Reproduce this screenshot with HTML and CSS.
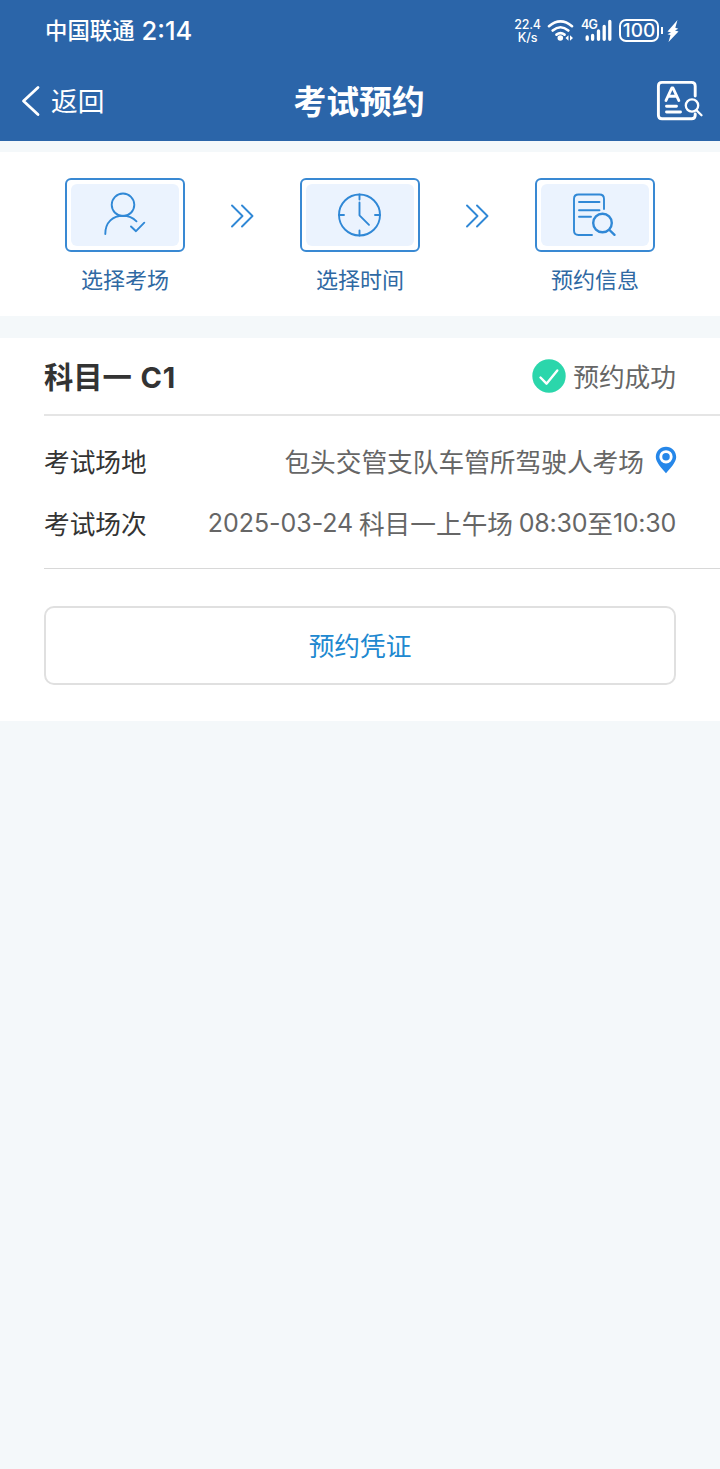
FILE: index.html
```
<!DOCTYPE html>
<html lang="zh-CN">
<head>
  <meta charset="UTF-8" />
  <meta name="viewport" content="width=device-width, initial-scale=1.0" />
  <title>考试预约</title>
  <link rel="stylesheet" href="styles.css">
</head>
<body>
  <!-- Header -->
  <header>
    <div class="status-bar">
      <div class="carrier"><span class="operator">中国联通</span><span class="clock">2:14</span></div>
      <div class="status-icons">
        <div class="speed"><span>22.4</span><span>K/s</span></div>
        <svg class="wifi" width="28" height="24" viewBox="0 0 28 24" fill="none" stroke="#fff" stroke-width="2.6" stroke-linecap="round">
          <path d="M2 7.2Q13.500 -2.500 25 7.200M5.700 11.500Q13.500 5 21.300 11.500M9.500 15.600Q13.500 12.500 17.500 15.600" />
          <circle cx="13.300" cy="19" r="2.800" fill="#fff" stroke="none" />
          <path d="M18.500 19l3-2.800v5.600zM26 19l-3-2.800v5.600z" fill="#fff" stroke="none" />
        </svg>
        <div class="signal">
          <span class="net">4G</span>
          <svg width="32" height="24" viewBox="0 0 32 24" stroke="#fff" stroke-width="3.300" stroke-linecap="round">
            <path d="M6.200 18v2.300M11.600 16.500v3.800M17.500 12v8.300M23.200 7.500v12.800M28.800 2.500v17.800" />
          </svg>
        </div>
        <div class="battery">100</div>
        <svg class="bolt" width="14" height="24" viewBox="0 0 14 24" fill="#fff">
          <path d="M11.500 1L1.500 12.500l3.500 1-3.500 1.800 3 .7L2.500 23 12.500 12.500l-3.500-1 3.300-1.800-3-.9z" />
        </svg>
      </div>
    </div>
    <nav>
      <a class="back" href="#">
        <svg width="20" height="32" viewBox="0 0 20 32" fill="none" stroke="#fff" stroke-width="2.800" stroke-linecap="round" stroke-linejoin="round">
          <path d="M17 2.500L2.500 16 17 29.500" />
        </svg>
        <span>返回</span>
      </a>
      <h1>考试预约</h1>
      <a class="records" href="#">
        <svg width="48" height="42" viewBox="0 0 48 42" fill="none" stroke="#fff" stroke-width="2.900" stroke-linecap="round" stroke-linejoin="round">
          <path d="M39.200 16V6q0-3.600-3.600-3.600H6Q2.400 2.400 2.400 6v29.200q0 3.600 3.600 3.600h29.600q3.600 0 3.600-3.600V34" />
          <path d="M10 20.500l5.800-12.500h1.200l5.800 12.500M12 16.300h8.700M10.500 26.200h10M10.500 32h14" />
          <circle cx="36" cy="25.500" r="6.200" stroke-width="2.300" />
          <path d="M40.500 30.200l5 5" stroke-width="2.300" />
        </svg>
      </a>
    </nav>
  </header>

  <!-- Steps -->
  <section class="steps">
    <div class="step">
      <div class="step-box">
        <svg viewBox="0 0 108 62">
          <circle cx="52" cy="20.800" r="11.300" />
          <path d="M34.300 50C34.300 38 42 31.800 52 31.800c5.500 0 10 2 13.500 5.500M60 42.500l5 4.700 8.300-8.500" />
        </svg>
      </div>
      <p>选择考场</p>
    </div>
    <svg class="arrow" width="24" height="26" viewBox="0 0 24 26"><path d="M2 2.500L12.500 13 2 23.500M12 2.500L22.500 13 12 23.500" /></svg>
    <div class="step">
      <div class="step-box">
        <svg viewBox="0 0 108 62">
          <circle cx="53.500" cy="31" r="20.500" />
          <path d="M53.500 10.500v5M53.500 46.500v5M33 31h5M69 31h5M53.500 18.500v12.800l9.500 9.500" />
        </svg>
      </div>
      <p>选择时间</p>
    </div>
    <svg class="arrow" width="24" height="26" viewBox="0 0 24 26"><path d="M2 2.500L12.500 13 2 23.500M12 2.500L22.500 13 12 23.500" /></svg>
    <div class="step">
      <div class="step-box">
        <svg viewBox="0 0 108 62">
          <path d="M51 51H37.500q-4.500 0-4.500-4.500V15q0-4.500 4.500-4.500h21q4.500 0 4.500 4.500v10M38 18h20.500M38 26.300h20.500M38 32.800h12" />
          <circle class="lens" cx="61.500" cy="39" r="9.300" />
          <path class="lens" d="M68.500 46l5 4.800" />
        </svg>
      </div>
      <p>预约信息</p>
    </div>
  </section>

  <!-- Booking -->
  <main>
    <div class="booking-head">
      <h2>科目一 <span>C1</span></h2>
      <div class="result">
        <svg width="34" height="34" viewBox="0 0 34 34" fill="none">
          <circle cx="17" cy="17" r="16.700" fill="#2bd6ab" />
          <path d="M8.500 18.500l6 6.200L25.300 11.500" stroke="#fff" stroke-width="2.400" stroke-linecap="round" stroke-linejoin="round" />
        </svg>
        <span>预约成功</span>
      </div>
    </div>
    <div class="details">
      <div class="row">
        <span class="label">考试场地</span>
        <span class="value">包头交管支队车管所驾驶人考场
          <svg width="22" height="28" viewBox="0 0 22 28">
            <path d="M11 .8C5.200.8.800 5.300.800 11c0 5.500 5.700 10.800 10.200 16.200C15.500 21.800 21.200 16.500 21.200 11 21.200 5.300 16.800.8 11 .8z" fill="#2687e9" />
            <circle cx="11" cy="10.800" r="5.200" fill="#2687e9" stroke="#fff" stroke-width="2.900" />
          </svg>
        </span>
      </div>
      <div class="row">
        <span class="label">考试场次</span>
        <span class="value"><span class="num date">2025-03-24</span>&nbsp;科目一上午场&nbsp;<span class="num">08:30</span>至<span class="num">10:30</span></span>
      </div>
    </div>
    <div class="actions">
      <button>预约凭证</button>
    </div>
  </main>
</body>
</html>
```
FILE: styles.css
```
* { box-sizing: border-box; }
body { margin: 0; background: #f4f8fa; font-family: "Noto Sans CJK SC", sans-serif; color: #333; }
h1, h2, p { margin: 0; }
a { color: inherit; text-decoration: none; }
svg { display: block; flex: none; }

/* Header */
header { height: 141px; background: #2b65a9; color: #fff; }
.status-bar { height: 61px; padding: 0 40px 0 45px; display: flex; justify-content: space-between; align-items: center; }
.carrier { display: flex; align-items: center; gap: 7px; font-size: 22.4px; font-weight: 500; line-height: 32px; }
.operator { padding-bottom: 3px; }
.clock { font-family: Inter, sans-serif; font-size: 25.5px; font-weight: 500; }
.status-icons { display: flex; align-items: center; height: 24px; }
.speed { width: 27px; display: flex; flex-direction: column; align-items: center; font: 500 12.5px/13px Inter, sans-serif; letter-spacing: -0.2px; margin-right: 7px; }
.wifi { margin: 0 6px 0 -1px; }
.signal { position: relative; margin-right: 6px; }
.net { position: absolute; left: 0; top: -1px; font: 600 12.5px/14px Inter, sans-serif; letter-spacing: -0.9px; }
.battery { position: relative; width: 40px; height: 23px; border: 2px solid #fff; border-radius: 7px; text-align: center; font: 500 19px/19px Inter, sans-serif; }
.battery::after { content: ""; position: absolute; right: -6px; top: 6px; width: 2px; height: 7px; background: #fff; }
.bolt { margin-left: 7px; }

nav { height: 80px; padding: 0 16px 0 21px; display: grid; grid-template-columns: 1fr 132px 1fr; align-items: center; }
.back { display: flex; align-items: center; gap: 10px; font-size: 26.7px; line-height: 40px; }
.back span { padding-bottom: 3px; }
h1 { margin-left: -3px; padding-bottom: 2px; font-size: 32.8px; line-height: 48px; font-weight: 700; white-space: nowrap; }
.records { justify-self: end; }

/* Steps */
.steps { margin-top: 11px; height: 164px; padding: 26px 65px 0; background: #fff; display: flex; justify-content: space-between; }
.step { width: 120px; text-align: center; }
.step-box { height: 74px; border: 2px solid #3989d3; border-radius: 6px; padding: 4px; }
.step-box svg { width: 108px; height: 62px; background: #ebf3fe; border-radius: 6px; }
.step svg, .arrow { fill: none; stroke: #3088d6; stroke-width: 1.9; stroke-linecap: round; stroke-linejoin: round; }
.step .lens { stroke-width: 2.4; }
.arrow { margin: 25px 1px 0 -1px; }
.step p { margin-top: 10px; font-size: 22px; line-height: 32px; color: #2f69a3; }

/* Booking */
main { margin-top: 22px; height: 383px; background: #fff; padding-left: 44px; }
.booking-head { height: 78px; padding-right: 44px; border-bottom: 2px solid #e5e5e5; display: flex; align-items: center; justify-content: space-between; }
h2 { font-size: 29.3px; line-height: 42px; font-weight: 700; }
h2 span { margin-left: 2px; font-family: Inter, sans-serif; font-size: 29px; letter-spacing: 0.8px; }
.result { display: flex; align-items: center; gap: 7px; font-size: 25.7px; color: #666; }
.result span { padding-bottom: 2px; }
.details { height: 153px; padding: 13px 44px 0 0; border-bottom: 1px solid #d8d8d8; }
.row { height: 62px; display: flex; align-items: center; justify-content: space-between; font-size: 25.7px; }
.value { display: flex; align-items: center; color: #666; }
.value svg { margin: 0 -1px 0 11px; }
.num { padding-top: 2px; font-family: Inter, sans-serif; font-size: 25px; letter-spacing: -0.25px; }
.date { letter-spacing: -0.05px; }
.actions { padding: 37px 44px 0 0; }
button { width: 100%; height: 79px; padding: 0 0 3px; background: #fff; border: 2px solid #e0e0e0; border-radius: 10px; font: 25.7px "Noto Sans CJK SC", sans-serif; color: #2088d0; }
```
